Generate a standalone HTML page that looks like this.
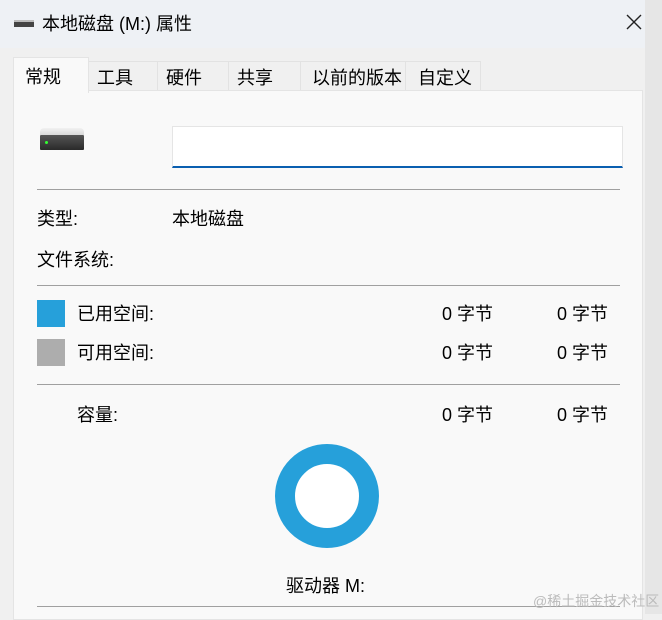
<!DOCTYPE html><html><head><meta charset="utf-8"><style>
body{margin:0;width:662px;height:614px;overflow:hidden;background:#f0f0f0;font-family:"Liberation Sans","Noto Sans CJK SC",sans-serif;color:#000;position:relative}
.a{position:absolute;white-space:nowrap}
.t{font-size:18px}
.tab{position:absolute;top:61px;height:29px;background:#f0f0f0;border:1px solid #e2e2e2;border-bottom:none;font-size:18px;line-height:32px;box-sizing:border-box;padding-left:8px}
.ln{position:absolute;left:37px;width:583px;height:1px;background:#a0a0a0}
</style></head><body>
<div class="a" style="left:0;top:0;width:648px;height:48px;background:#eef1f5"></div>
<div class="a" style="left:645px;top:0;width:17px;height:614px;background:#e6e6e6"></div>
<div class="a" style="left:14px;top:20px;width:20px;height:5px;background:#444;border-top:2px solid #bbb"></div>
<div class="a" style="left:42px;top:10px;font-size:18px">本地磁盘 (M:) 属性</div>
<svg class="a" style="left:625px;top:13px" width="18" height="18"><path d="M2 2L16 16M16 2L2 16" stroke="#222" stroke-width="1.4"/></svg>
<div class="tab" style="left:88px;width:70px">工具</div>
<div class="tab" style="left:157px;width:72px">硬件</div>
<div class="tab" style="left:228px;width:73px">共享</div>
<div class="tab" style="left:300px;width:106px;padding-left:11px">以前的版本</div>
<div class="tab" style="left:405px;width:76px;padding-left:12px">自定义</div>
<div class="a" style="left:13px;top:90px;width:630px;height:530px;background:#f9f9f9;border:1px solid #e4e4e4;box-sizing:border-box"></div>
<div class="a" style="left:13px;top:57px;width:76px;height:36px;background:#f9f9f9;border:1px solid #e4e4e4;border-bottom:none;box-sizing:border-box;font-size:18px;padding:5px 0 0 11px">常规</div>
<div class="a" style="left:40px;top:128px;width:44px;height:7px;background:linear-gradient(#f2f2f2,#d8d8d8);border-radius:4px 4px 0 0"></div>
<div class="a" style="left:40px;top:135px;width:44px;height:15px;background:linear-gradient(#555,#2a2a2a);border-radius:1px"></div>
<div class="a" style="left:45px;top:141px;width:3px;height:3px;background:#3f3;border-radius:50%"></div>
<div class="a" style="left:172px;top:126px;width:449px;height:39px;background:#fff;border:1px solid #e5e5e5;border-bottom:2px solid #0a5fb0"></div>
<div class="ln" style="top:189px"></div>
<div class="a t" style="left:37px;top:205px">类型:</div>
<div class="a t" style="left:172px;top:205px">本地磁盘</div>
<div class="a t" style="left:37px;top:246px">文件系统:</div>
<div class="ln" style="top:285px"></div>
<div class="a" style="left:37px;top:300px;width:28px;height:27px;background:#26a0da"></div>
<div class="a t" style="left:77px;top:300px">已用空间:</div>
<div class="a t" style="left:442px;top:300px">0 字节</div>
<div class="a t" style="left:557px;top:300px">0 字节</div>
<div class="a" style="left:37px;top:339px;width:28px;height:27px;background:#adadad"></div>
<div class="a t" style="left:77px;top:339px">可用空间:</div>
<div class="a t" style="left:442px;top:339px">0 字节</div>
<div class="a t" style="left:557px;top:339px">0 字节</div>
<div class="ln" style="top:384px"></div>
<div class="a t" style="left:77px;top:401px">容量:</div>
<div class="a t" style="left:442px;top:401px">0 字节</div>
<div class="a t" style="left:557px;top:401px">0 字节</div>
<div class="a" style="left:275px;top:444px;width:64px;height:64px;border:20px solid #26a0da;border-radius:50%;background:#fff"></div>
<div class="a t" style="left:286px;top:572px">驱动器 M:</div>
<div class="ln" style="top:606px"></div>
<div class="a" style="left:533px;top:591px;font-size:14px;color:#bbb">@稀土掘金技术社区</div>
</body></html>
